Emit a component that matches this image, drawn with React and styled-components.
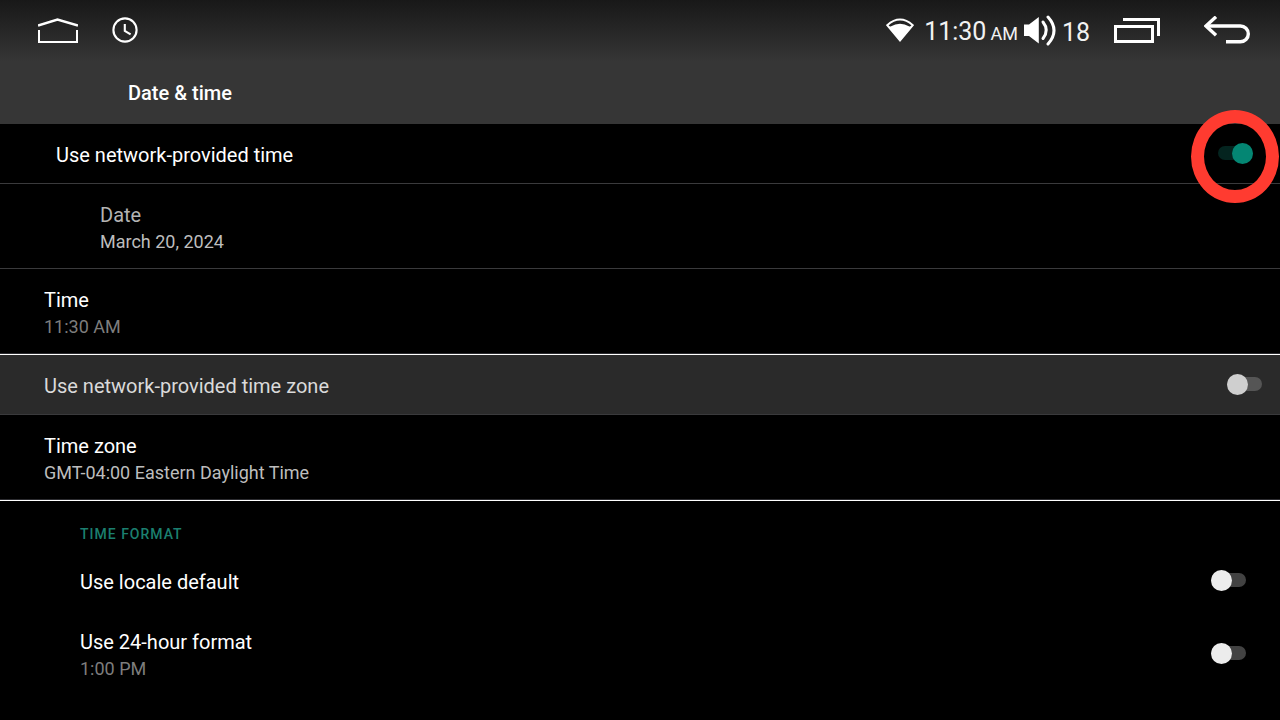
import React, { useState } from 'react';
import styled, { createGlobalStyle } from 'styled-components';

const GlobalStyle = createGlobalStyle`
  body {
    margin: 0;
    background-color: #000;
    color: #fff;
    font-family: Roboto, "Liberation Sans", sans-serif;
  }
`;

const Header = styled.header`
  background: linear-gradient(#181818, #363636 62px);
`;

const StatusBar = styled.div`
  display: flex;
  align-items: center;
  justify-content: space-between;
  height: 62px;
  padding: 0 30px 0 38px;
  box-sizing: border-box;
`;

const Group = styled.div`
  display: flex;
  align-items: center;
  gap: ${(props) => props.$gap || 0}px;
`;

const IconButton = styled.button`
  display: flex;
  padding: 0;
  border: none;
  background: none;
  color: inherit;
  cursor: pointer;
`;

const Icon = styled.svg`
  display: block;
  fill: none;
  stroke: #fff;
`;

const StatusText = styled.span`
  padding-top: 3px;
  font-size: 25px;
  line-height: 30px;
  color: #f2f2f2;
`;

const Clock = styled(StatusText)`
  margin: 0 6px 0 10px;
`;

const Volume = styled(StatusText)`
  margin: 0 24px 0 6px;
`;

const Meridiem = styled.span`
  font-size: 18px;
  margin-left: 4px;
`;

const Title = styled.h1`
  margin: 0;
  padding: 17px 128px;
  font-size: 20px;
  line-height: 28px;
  font-weight: 500;
`;

const dividers = {
  none: 'border-bottom: 1px solid transparent;',
  thin: 'border-bottom: 1px solid #3a3a3c;',
  bright: 'border-bottom: 1px solid #fff; box-shadow: inset 0 -1px #2b2b2f; padding-bottom: 15px;',
};

const Row = styled.div`
  display: flex;
  align-items: center;
  justify-content: space-between;
  padding: 17px ${(props) => props.$right || 0}px 14px ${(props) => props.$left}px;
  background-color: ${(props) => (props.$active ? '#2a2a2a' : '#000')};
  ${(props) => dividers[props.$divider || 'none']}
`;

const Texts = styled.div`
  display: flex;
  flex-direction: column;
`;

const Label = styled.label`
  font-size: 20px;
  line-height: 28px;
  color: ${(props) => props.$color || '#fff'};
`;

const Summary = styled.span`
  font-size: 18px;
  line-height: 25px;
  color: ${(props) => props.$color || '#bdbdbd'};
`;

const SwitchBox = styled.div`
  position: relative;
  display: flex;
  padding-bottom: 3px;
`;

const Switch = styled.input`
  appearance: none;
  position: relative;
  width: 35px;
  height: 21px;
  margin: 0;
  cursor: pointer;

  &::before {
    content: '';
    position: absolute;
    inset: 3px 0 4px;
    border-radius: 7px;
    background-color: ${(props) => (props.$dim ? '#555' : '#424242')};
  }

  &::after {
    content: '';
    position: absolute;
    top: 0;
    left: 0;
    width: 21px;
    height: 21px;
    border-radius: 50%;
    background-color: ${(props) => (props.$dim ? '#cfcfcf' : '#ececec')};
  }

  &:checked::before {
    background-color: #04241f;
  }

  &:checked::after {
    left: 14px;
    background-color: #048673;
  }
`;

const Ring = styled.span`
  position: absolute;
  z-index: 1;
  top: -33px;
  left: -27px;
  width: 88px;
  height: 93px;
  box-sizing: border-box;
  border: 13px solid #ff3b30;
  border-radius: 50%;
  pointer-events: none;
`;

const SectionTitle = styled.h2`
  margin: 0;
  padding: 23px 80px 7px;
  font-size: 14px;
  line-height: 20px;
  font-weight: 500;
  letter-spacing: 1px;
  color: #1b7f6f;
`;

const settings = [
  { id: 'auto-time', label: 'Use network-provided time', left: 56, right: 27, toggle: true, ring: true, divider: 'thin' },
  { id: 'date', label: 'Date', summary: 'March 20, 2024', left: 100, color: '#b4b4b4', divider: 'thin' },
  { id: 'time', label: 'Time', summary: '11:30 AM', left: 44, summaryColor: '#7d7d7d', divider: 'bright' },
  { id: 'auto-zone', label: 'Use network-provided time zone', left: 44, right: 18, toggle: true, active: true, color: '#dadada', divider: 'thin' },
  { id: 'zone', label: 'Time zone', summary: 'GMT-04:00 Eastern Daylight Time', left: 44, divider: 'bright' },
];

const formats = [
  { id: 'locale', label: 'Use locale default', left: 80, right: 34, toggle: true },
  { id: 'hour24', label: 'Use 24-hour format', summary: '1:00 PM', left: 80, right: 34, toggle: true, summaryColor: '#7d7d7d' },
];

function Setting({ item, checked, onToggle }) {
  return (
    <Row $left={item.left} $right={item.right} $active={item.active} $divider={item.divider}>
      <Texts>
        <Label
          as={item.toggle ? 'label' : 'span'}
          htmlFor={item.toggle ? item.id : undefined}
          $color={item.color}
        >
          {item.label}
        </Label>
        {item.summary && <Summary $color={item.summaryColor}>{item.summary}</Summary>}
      </Texts>
      {item.toggle && (
        <SwitchBox>
          <Switch
            type="checkbox"
            role="switch"
            id={item.id}
            checked={checked}
            onChange={() => onToggle(item.id)}
            $dim={item.active}
          />
          {item.ring && <Ring />}
        </SwitchBox>
      )}
    </Row>
  );
}

function App() {
  const [values, setValues] = useState({ 'auto-time': true });

  const toggle = (id) => setValues({ ...values, [id]: !values[id] });

  const renderItem = (item) => (
    <Setting key={item.id} item={item} checked={!!values[item.id]} onToggle={toggle} />
  );

  return (
    <>
      <GlobalStyle />
      <Header>
        <StatusBar>
          <Group $gap={34}>
            <IconButton aria-label="Home">
              <Icon width="40" height="26" viewBox="0 0 40 26" strokeWidth="2">
                <path d="M0 7.5 L19.5 1.5 L40 7.5" strokeWidth="2.6" />
                <path d="M1 12 V24 H39 V12" />
              </Icon>
            </IconButton>
            <Icon width="26" height="28" viewBox="0 0 26 28" strokeWidth="2.1">
              <circle cx="13" cy="13" r="11.6" />
              <path d="M12.8 7 V14 L18.6 17.4" />
            </Icon>
          </Group>
          <Group>
            <Icon width="28" height="26" viewBox="0 0 28 26">
              <path d="M1.2 7.2 Q14 -4.2 26.8 7.2 L14 22.5 Z" strokeWidth="2" />
              <path d="M4.6 8.6 Q14 2.8 23.4 8.6 L26 8.5 L14 23 L2 8.5 Z" fill="#fff" stroke="none" />
            </Icon>
            <Clock>11:30<Meridiem>AM</Meridiem></Clock>
            <Icon width="32" height="32" viewBox="0 0 32 32" strokeWidth="3" strokeLinecap="round">
              <path d="M0 9.5 H5 L14.8 2 V28.4 L5 21 H0 Z" fill="#fff" stroke="none" />
              <path d="M19 7 Q25.5 15.3 19 23.5" />
              <path d="M24 2 Q36 15.3 24 29" />
            </Icon>
            <Volume>18</Volume>
            <Group $gap={44}>
              <IconButton aria-label="Recent apps">
                <Icon width="46" height="26" viewBox="0 0 46 26" strokeWidth="3">
                  <path d="M9 1.5 H44.5 V18" />
                  <rect x="1.5" y="8.5" width="37" height="15" />
                </Icon>
              </IconButton>
              <IconButton aria-label="Back">
                <Icon width="46" height="30" viewBox="0 0 46 30" strokeWidth="3.4">
                  <path d="M12 0.8 L2 10 L12 19.2" />
                  <path d="M2 10 H36.4 A7.9 7.9 0 0 1 36.4 25.8 H22" />
                </Icon>
              </IconButton>
            </Group>
          </Group>
        </StatusBar>
        <Title>Date &amp; time</Title>
      </Header>
      <main>
        {settings.map(renderItem)}
        <SectionTitle>TIME FORMAT</SectionTitle>
        {formats.map(renderItem)}
      </main>
    </>
  );
}

export default App;
